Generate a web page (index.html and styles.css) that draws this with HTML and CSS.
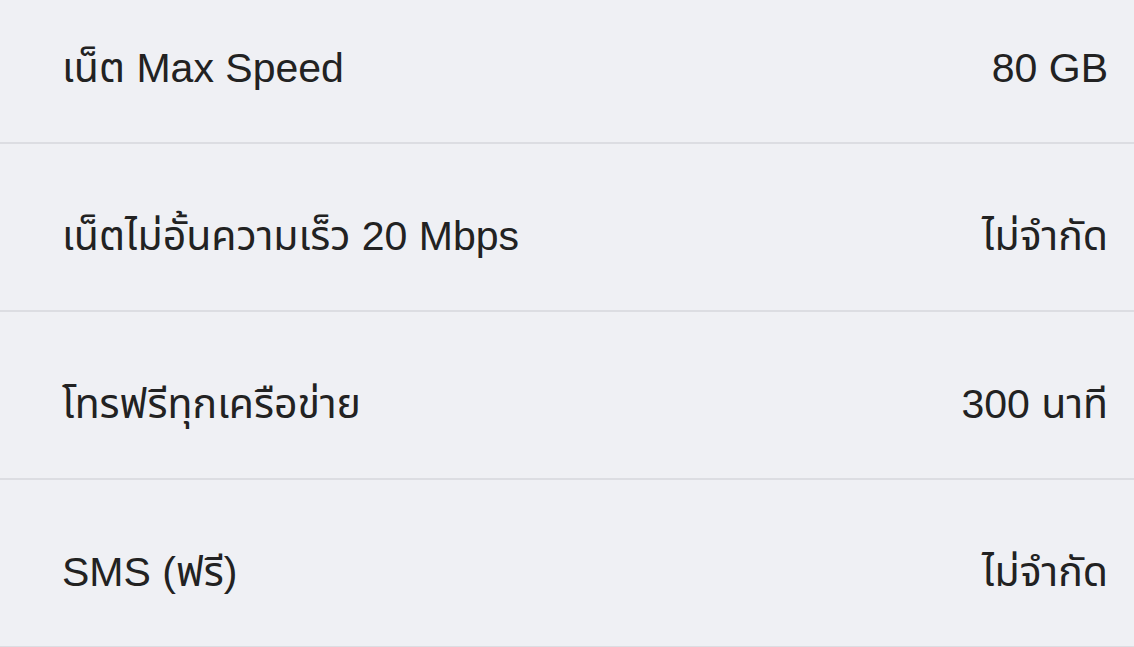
FILE: index.html
```html
<!DOCTYPE html>
<html lang="th">
<head>
<meta charset="utf-8">
<link rel="stylesheet" href="styles.css">
</head>
<body>
<div class="list">
  <div class="row"><span class="label">เน็ต Max Speed</span><span class="value">80 GB</span></div>
  <div class="row"><span class="label">เน็ตไม่อั้นความเร็ว 20 Mbps</span><span class="value">ไม่จำกัด</span></div>
  <div class="row"><span class="label">โทรฟรีทุกเครือข่าย</span><span class="value">300 นาที</span></div>
  <div class="row"><span class="label">SMS (ฟรี)</span><span class="value">ไม่จำกัด</span></div>
</div>
</body>
</html>
```
FILE: styles.css
```css
html, body {
  margin: 0;
  padding: 0;
  background: #eff0f4;
  overflow: hidden;
}
body {
  font-family: "Liberation Sans", "Noto Sans Thai", "Noto Sans", sans-serif;
  color: #222222;
}
.list {
  margin-top: -24px;
}
.row {
  display: flex;
  align-items: center;
  justify-content: space-between;
  padding: 19px 26px 0 62px;
  box-sizing: border-box;
  height: 168px;
  border-bottom: 2px solid #dcdde2;
  font-size: 41px;
}
```
